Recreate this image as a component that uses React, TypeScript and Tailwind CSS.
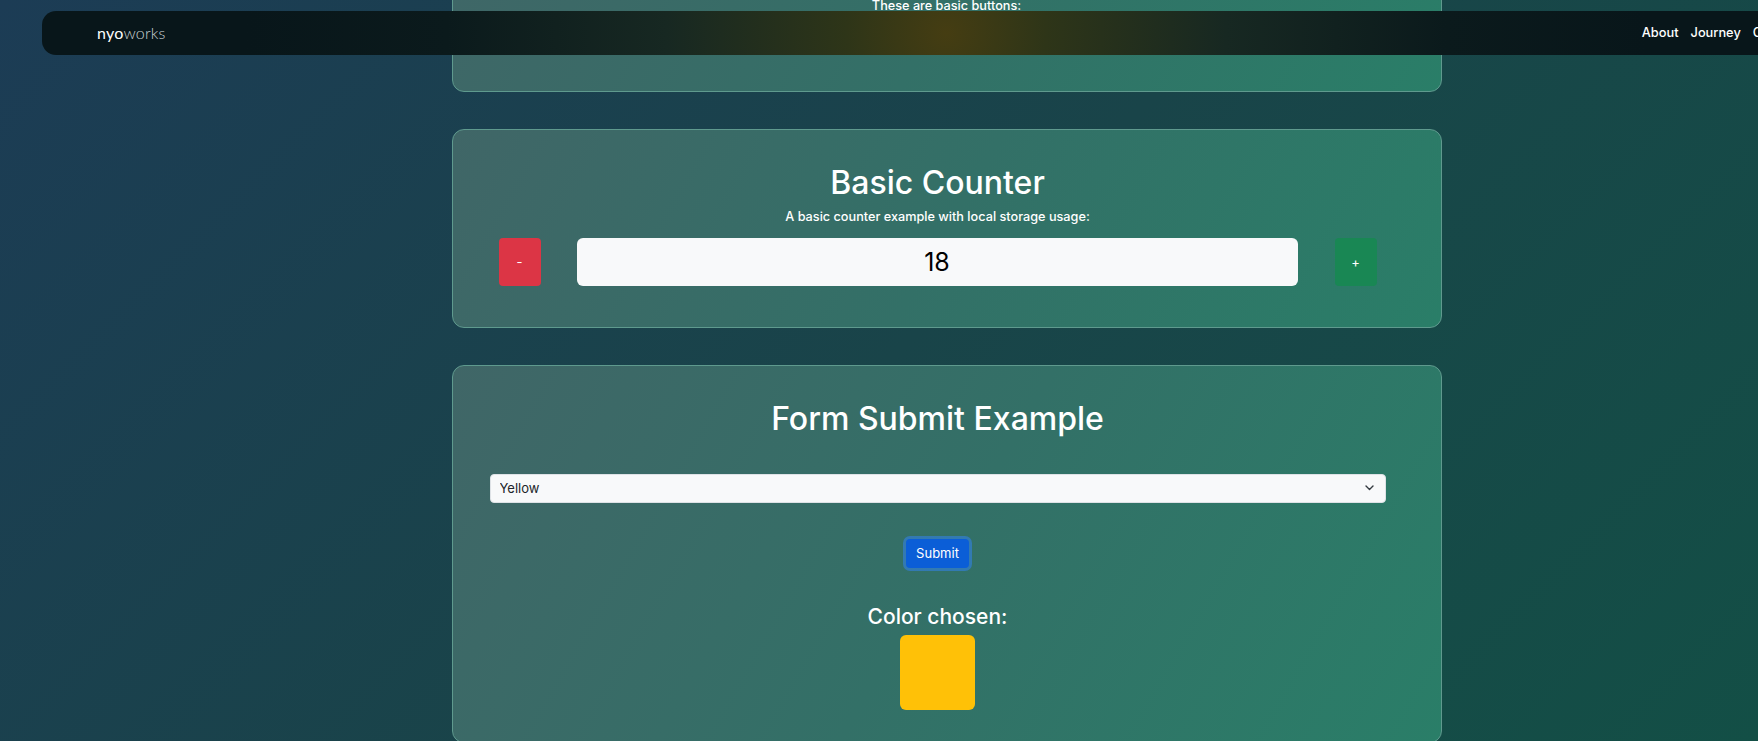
import { useState } from "react";

function Card({ className = "", children }: { className?: string; children: React.ReactNode }) {
  return (
    <section
      className={`w-[990px] shrink-0 rounded-xl border border-[#5f9a8e] bg-[linear-gradient(120deg,#406667_0%,#337067_50%,#2a7e68_100%)] ${className}`}
    >
      {children}
    </section>
  );
}

export default function App() {
  const [count, setCount] = useState(18);
  const [color, setColor] = useState("Yellow");
  const swatch: Record<string, string> = { Yellow: "#ffc107", Red: "#dc3545", Green: "#198754", Blue: "#0d6efd" };

  return (
    <div className="relative h-[741px] w-full overflow-hidden bg-[linear-gradient(135deg,#1c3c55_0%,#194449_50%,#134f46_100%)] font-['Inter',sans-serif] text-white">
      {/* navbar */}
      <nav className="absolute left-[42px] top-[11px] z-10 flex h-[44px] w-[1809px] items-center justify-between rounded-[14px] bg-[radial-gradient(circle_at_50%_50%,#453d12_0px,#2e3518_100px,#172822_280px,#0b1a1c_500px,#08161a_700px)] pl-[55px] pr-[50px]">
        <a href="#" className="font-['Lato',sans-serif] text-[16px] leading-none tracking-[0.2px]">
          <span className="text-white">nyo</span>
          <span className="font-light text-[#c9d1d3]">works</span>
        </a>
        <div className="flex items-center gap-3 text-[12.8px] font-medium text-white">
          <a href="#">About</a>
          <a href="#">Journey</a>
          <a href="#">Contact</a>
        </div>
      </nav>

      <main className="flex w-[1893px] flex-col items-center gap-[37px]">
        {/* basic buttons (scrolled mostly out of view) */}
        <Card className="-mt-[82px] h-[174px] pt-[34px] text-center">
          <h2 className="text-[32px] font-medium leading-[1.2]">Basic Buttons</h2>
          <p className="mt-[5px] text-[12.7px] font-medium leading-[20px]">These are basic buttons:</p>
        </Card>

        {/* counter */}
        <Card className="pb-[41px] pl-[37px] pr-[55px] pt-[34px]">
          <h2 className="text-center text-[32px] font-medium leading-[1.2]">Basic Counter</h2>
          <p className="mt-[5px] text-center text-[12.7px] font-medium leading-[20px]">
            A basic counter example with local storage usage:
          </p>
          <div className="mt-[11px] flex items-center gap-[36px] px-[9px]">
            <button
              onClick={() => setCount(count - 1)}
              className="h-[48px] w-[42px] rounded-[4px] bg-[#dc3545] text-[13px] text-white"
            >
              -
            </button>
            <div className="flex h-[48px] flex-1 items-center justify-center rounded-[6px] bg-[#f8f9fa] text-[25px] text-black">
              {count}
            </div>
            <button
              onClick={() => setCount(count + 1)}
              className="ml-px h-[48px] w-[42px] rounded-[4px] bg-[#198754] text-[13px] text-white"
            >
              +
            </button>
          </div>
        </Card>

        {/* form */}
        <Card className="h-[378px] pl-[37px] pr-[55px] pt-[34px]">
          <h2 className="text-center text-[32px] font-medium leading-[1.2]">Form Submit Example</h2>
          <div className="relative mt-[35px]">
            <select
              value={color}
              onChange={(e) => setColor(e.target.value)}
              className="h-[29px] w-full appearance-none rounded-[4px] border border-[#dee2e6] bg-[#f8f9fa] pl-[9px] text-[13px] text-[#212529] outline-none"
            >
              <option>Yellow</option>
              <option>Red</option>
              <option>Green</option>
              <option>Blue</option>
            </select>
            <svg
              className="pointer-events-none absolute right-[12px] top-[11px]"
              width="9"
              height="6"
              viewBox="0 0 9 6"
              fill="none"
              stroke="#343a40"
              strokeWidth="1.4"
              strokeLinecap="round"
              strokeLinejoin="round"
            >
              <path d="M1 1l3.5 3.5L8 1" />
            </svg>
          </div>
          <div className="mt-[36px] flex justify-center">
            <button className="h-[29px] rounded-[4px] bg-[#0b5ed7] px-[10px] text-[13px] text-white shadow-[0_0_0_3px_rgba(49,132,253,0.5)]">
              Submit
            </button>
          </div>
          <h3 className="mt-[37px] text-center text-[21px] font-medium leading-[24px]">Color chosen:</h3>
          <div className="mt-[6px] flex justify-center">
            <div className="h-[75px] w-[75px] rounded-[6px]" style={{ backgroundColor: swatch[color] }} />
          </div>
        </Card>
      </main>
    </div>
  );
}
